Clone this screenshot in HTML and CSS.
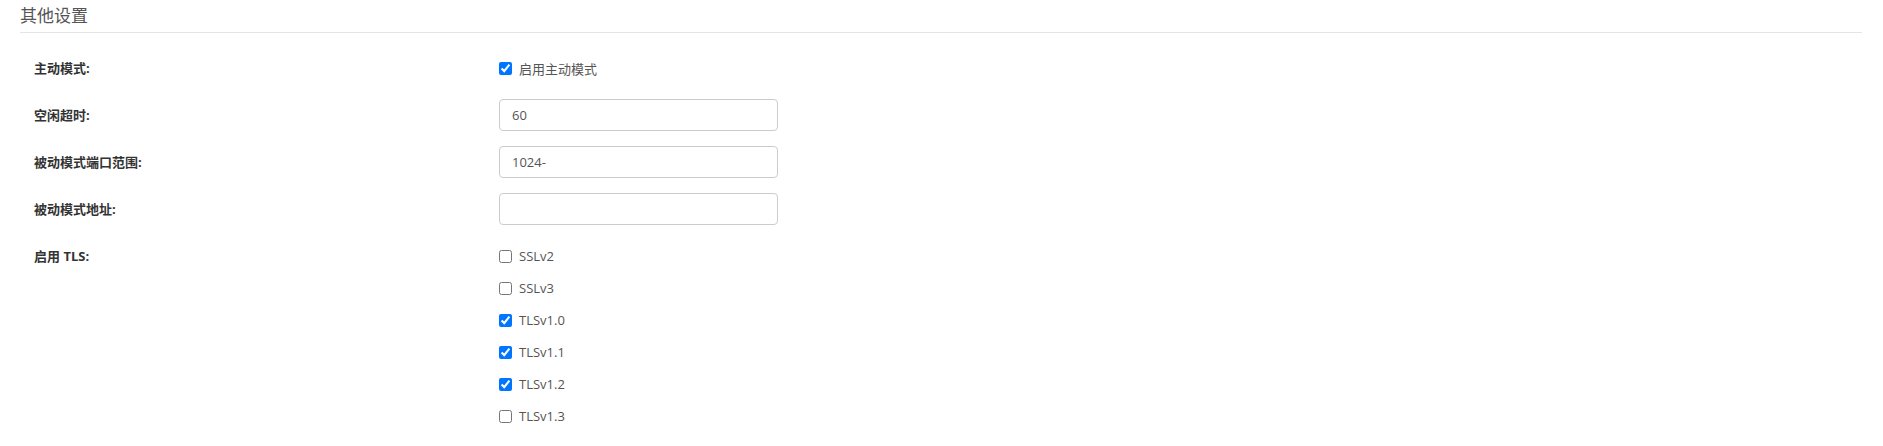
FILE: index.html
```html
<!DOCTYPE html>
<html lang="zh">
<head>
<meta charset="utf-8">
<link rel="stylesheet" href="styles.css">
</head>
<body>
<div class="panel">
  <div class="panel-title">其他设置</div>
  <div class="form">
    <div class="row">
      <div class="label">主动模式:</div>
      <div class="control">
        <label class="check"><input type="checkbox" checked><span>启用主动模式</span></label>
      </div>
    </div>
    <div class="row">
      <div class="label">空闲超时:</div>
      <div class="control"><input class="text" type="text" value="60"></div>
    </div>
    <div class="row">
      <div class="label">被动模式端口范围:</div>
      <div class="control"><input class="text" type="text" value="1024-"></div>
    </div>
    <div class="row">
      <div class="label">被动模式地址:</div>
      <div class="control"><input class="text" type="text" value=""></div>
    </div>
    <div class="row row-top">
      <div class="label">启用 TLS:</div>
      <div class="control list">
        <label class="check"><input type="checkbox"><span>SSLv2</span></label>
        <label class="check"><input type="checkbox"><span>SSLv3</span></label>
        <label class="check"><input type="checkbox" checked><span>TLSv1.0</span></label>
        <label class="check"><input type="checkbox" checked><span>TLSv1.1</span></label>
        <label class="check"><input type="checkbox" checked><span>TLSv1.2</span></label>
        <label class="check"><input type="checkbox"><span>TLSv1.3</span></label>
      </div>
    </div>
  </div>
</div>
</body>
</html>
```
FILE: styles.css
```css
html, body {
  margin: 0;
  padding: 0;
  background: #fff;
}
body {
  font-family: "Open Sans", "Noto Sans CJK SC", sans-serif;
  color: #333;
}
.panel {
  padding: 0 21px 0 20px;
}
.panel-title {
  font-size: 17px;
  line-height: 24px;
  padding-top: 4px;
  box-sizing: border-box;
  height: 33px;
  border-bottom: 1px solid #e5e5e5;
  color: #555;
}
.form {
  padding: 19px 0 0 14px;
}
.row {
  display: flex;
  align-items: center;
  min-height: 32px;
  margin-bottom: 15px;
}
.row-top {
  align-items: flex-start;
}
.label {
  width: 465px;
  flex: none;
  font-size: 13px;
  font-weight: bold;
  color: #333;
  line-height: 32px;
}
.control {
  flex: none;
}
.list {
  display: flex;
  flex-direction: column;
}
.check {
  display: flex;
  align-items: center;
  height: 32px;
  font-size: 13px;
  color: #555;
}
.check input {
  margin: 0 7px 0 0;
  width: 13px;
  height: 13px;
}
.text {
  width: 279px;
  height: 32px;
  box-sizing: border-box;
  border: 1px solid #ccc;
  border-radius: 4px;
  padding: 0 12px;
  font-family: "Open Sans", "Noto Sans CJK SC", sans-serif;
  font-size: 13px;
  color: #555;
  outline: none;
}
```
